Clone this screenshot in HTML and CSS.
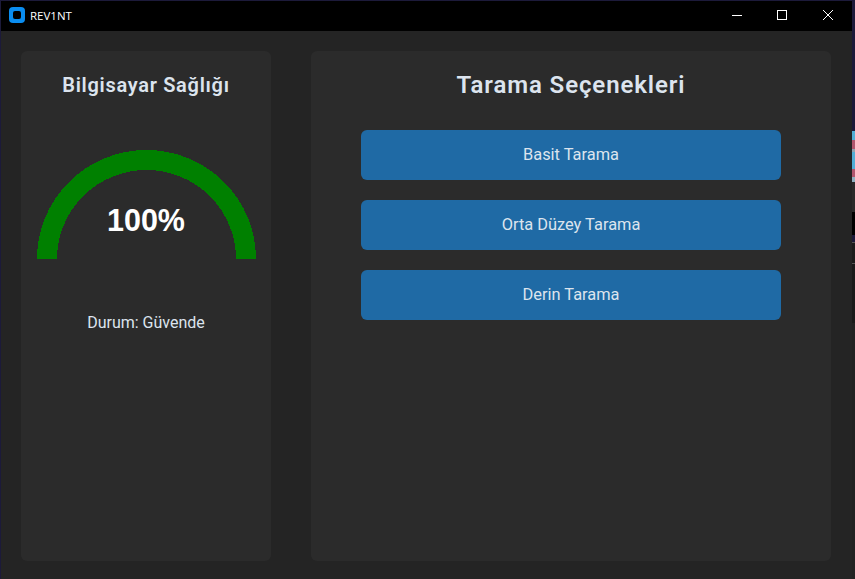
FILE: index.html
```html
<!DOCTYPE html>
<html lang="tr">
<head>
<meta charset="utf-8">
<title>REV1NT</title>
<link rel="stylesheet" href="styles.css">
</head>
<body>
<div class="desktop">
  <div class="window">
    <header class="titlebar">
      <svg class="app-icon" width="16" height="16" viewBox="0 0 16 16"><rect width="16" height="16" rx="4" fill="#0a8df0"/><rect x="4" y="4" width="8" height="8" rx="2" fill="#000"/></svg>
      <span class="app-title">REV1NT</span>
      <div class="controls">
        <button class="ctl ctl-min"><svg width="10" height="10" viewBox="0 0 10 10"><path d="M0 5.5H10" stroke="#fff" fill="none"/></svg></button>
        <button class="ctl"><svg width="10" height="10" viewBox="0 0 10 10"><rect x=".5" y=".5" width="9" height="9" stroke="#fff" fill="none"/></svg></button>
        <button class="ctl"><svg width="10" height="10" viewBox="0 0 10 10"><path d="M0 0L10 10M10 0L0 10" stroke="#fff" fill="none"/></svg></button>
      </div>
    </header>
    <main class="content">
      <section class="card health">
        <h2 class="health-title">Bilgisayar Sağlığı</h2>
        <div class="gauge">
          <svg width="219" height="109" viewBox="0 0 219 109" shape-rendering="crispEdges"><path d="M10 109A99.5 99 0 0 1 209 109" fill="none" stroke="#008000" stroke-width="20"/></svg>
          <span class="gauge-value">100%</span>
        </div>
        <p class="status">Durum: Güvende</p>
      </section>
      <section class="card options">
        <h1 class="options-title">Tarama Seçenekleri</h1>
        <button class="scan">Basit Tarama</button>
        <button class="scan">Orta Düzey Tarama</button>
        <button class="scan">Derin Tarama</button>
      </section>
    </main>
  </div>
  <aside class="strip">
    <div class="s-navy"></div>
    <div class="s-photo"></div>
    <div class="s-dark"></div>
    <div class="s-black"></div>
    <div class="s-dark2"></div>
    <div class="s-dark3"></div>
    <div class="s-dark4"></div>
  </aside>
</div>
</body>
</html>
```
FILE: styles.css
```css
* { box-sizing: border-box; }
html, body { margin: 0; height: 100%; background: #242424; }
body { font-family: Roboto, sans-serif; color: #dce4ee; overflow: hidden; }
.desktop { display: flex; width: 855px; height: 579px; }
.window { width: 852px; height: 579px; display: flex; flex-direction: column; padding: 1px 0 0 1px; background: #1c1a3a; }
.titlebar { height: 30px; background: #000; display: flex; align-items: center; padding: 0 1px 2px 8px; flex: none; }
.app-icon { flex: none; }
.app-title { margin-left: 5px; font: 11.5px "Open Sans", sans-serif; color: #fff; }
.controls { margin-left: auto; display: flex; }
.ctl { width: 46px; height: 28px; padding: 0; border: 0; background: transparent; display: flex; align-items: center; justify-content: center; }
.ctl-min { width: 45px; }
.content { flex: 1; background: #242424; display: flex; gap: 40px; padding: 20px 20px 18px 20px; }
.card { background: #2b2b2b; border-radius: 6px; display: flex; flex-direction: column; align-items: center; }
.health { width: 250px; padding-top: 21px; }
.health-title { margin: 0; font-size: 20px; font-weight: 600; line-height: 26px; letter-spacing: .7px; }
.gauge { position: relative; width: 219px; height: 109px; margin-top: 52px; }
.gauge svg { display: block; }
.gauge-value { position: absolute; left: 0; right: 0; top: 51px; text-align: center; font: bold 30.5px/38px "Liberation Sans", sans-serif; color: #fff; }
.status { margin: 54px 0 0; font-size: 16px; line-height: 20px; }
.options { width: 520px; padding-top: 19px; }
.options-title { margin: 0 0 30px; font-size: 24px; font-weight: 600; line-height: 30px; letter-spacing: .9px; }
.scan { width: 420px; height: 50px; margin-bottom: 20px; padding: 0 0 2px; flex: none; border: 0; border-radius: 6px; background: #1f6aa5; color: #dce4ee; font: 16.4px Roboto, sans-serif; }
.strip { width: 3px; display: flex; flex-direction: column; background: #1c1a3a; }
.s-navy { height: 131px; }
.s-photo { height: 51px; background: linear-gradient(#52aed6 0 9px, #b0566e 9px 18px, #8fa4b0 18px 21px, #52aed6 21px 38px, #b0566e 38px 46px, #8fb0c0 46px 51px); }
.s-dark { height: 30px; background: #2a2a2a; }
.s-black { height: 23px; background: #000; }
.s-dark2 { height: 22px; background: #1c1c1c; border-top: 1px solid #555; border-bottom: 1px solid #555; margin-top: 7px; }
.s-dark3 { height: 59px; background: #1a1a1a; }
.s-dark4 { flex: 1; background: #222; }
```
